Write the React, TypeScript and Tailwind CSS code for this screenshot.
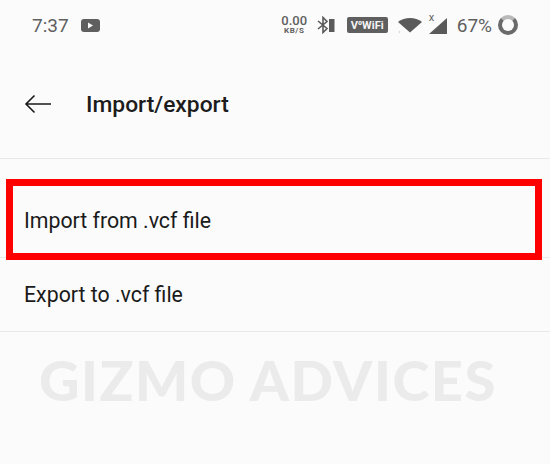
const rowText = "text-[21.3px] leading-[28px] text-[#1a1a1a]";

function StatusBar() {
  return (
    <div className="h-[50px] flex items-center justify-between pl-[32px] pr-[32px] text-[#5f5f5f]">
      <div className="flex items-center gap-[12px]">
        <span className="text-[19px] leading-none">7:37</span>
        <svg width="19" height="13" viewBox="0 0 19 13">
          <rect width="19" height="13" rx="3" fill="#5f5f5f" />
          <path d="M7 3.5 L12 6.5 L7 9.5 Z" fill="#fafafa" />
        </svg>
      </div>
      <div className="flex items-center">
        <div className="flex flex-col items-center w-[25px] mb-[2px] font-medium">
          <span className="text-[13px] leading-[13px]">0.00</span>
          <span className="text-[8px] leading-[8px] tracking-[0.6px] font-bold">KB/S</span>
        </div>
        <svg className="ml-[10px]" width="18" height="18" viewBox="0 0 18 18" fill="none">
          <path d="M1 5 L10 12.5 L6 16.5 L6 1.5 L10 5.5 L1 13" stroke="#5a5a5a" strokeWidth="1.6" />
          <rect x="12" y="3" width="5.5" height="13" fill="#5a5a5a" />
        </svg>
        <div className="ml-[12px] w-[41px] h-[16px] bg-[#5f5f5f] rounded-[2px] flex items-center justify-center text-[#f4f4f4] text-[11px] leading-none font-bold">
          V⁰WiFi
        </div>
        <svg className="ml-[10px]" width="24" height="20" viewBox="0 0 24 20">
          <path d="M0 7 C6.5 1.5 17.5 1.5 24 7 L12 17.5 Z" fill="#5a5a5a" />
          <circle cx="1.5" cy="17" r="0.8" fill="#c8c8c8" />
        </svg>
        <div className="ml-[7px] relative w-[18px] h-[20px]">
          <svg width="18" height="20" viewBox="0 0 18 20" className="block">
            <path d="M18 3 L18 19 L0 19 Z" fill="#5a5a5a" />
          </svg>
          <span className="absolute left-[0px] top-[-3px] text-[11px] leading-[12px]">x</span>
        </div>
        <span className="ml-[10px] mt-[1px] text-[19px] leading-none">67%</span>
        <div className="ml-[6px] w-[20px] h-[20px] rounded-full border-[4px] border-[#6a6a6a] border-t-[#b9b9b9]" />
      </div>
    </div>
  );
}

export default function App() {
  return (
    <div className="relative w-[550px] h-[464px] overflow-hidden bg-[#fbfbfb] font-['Roboto',sans-serif]">
      <StatusBar />

      <header className="h-[109px] flex items-center border-b border-[#e8e8e8]">
        <svg className="ml-[24px]" width="28" height="20" viewBox="0 0 28 20" fill="none">
          <path d="M27 10 H2 M10.5 1.5 L2 10 L10.5 18.5" stroke="#1a1a1a" strokeWidth="1.6" />
        </svg>
        <h1 className="ml-[34px] mt-[2px] text-[22.8px] leading-[28px] font-medium text-[#1c1c1c]">Import/export</h1>
      </header>

      <div className="pt-[25px]">
        <div className="h-[74px] flex items-center pl-[24px] border-b border-[#e8e8e8]">
          <span className={rowText}>Import from .vcf file</span>
        </div>
        <div className="h-[74px] flex items-center pl-[24px] border-b border-[#e8e8e8]">
          <span className={rowText}>Export to .vcf file</span>
        </div>
      </div>

      <div className="mt-[16px] pl-[39px] font-['Lato',sans-serif] font-black text-[56px] tracking-[1.5px] leading-[64px] text-[#ebebeb] whitespace-nowrap">
        GIZMO ADVICES
      </div>

      {/* red highlight drawn over the first row */}
      <div className="absolute left-[6px] top-[179px] w-[536px] h-[81px] border-[7px] border-[#ff0000]" />
    </div>
  );
}
